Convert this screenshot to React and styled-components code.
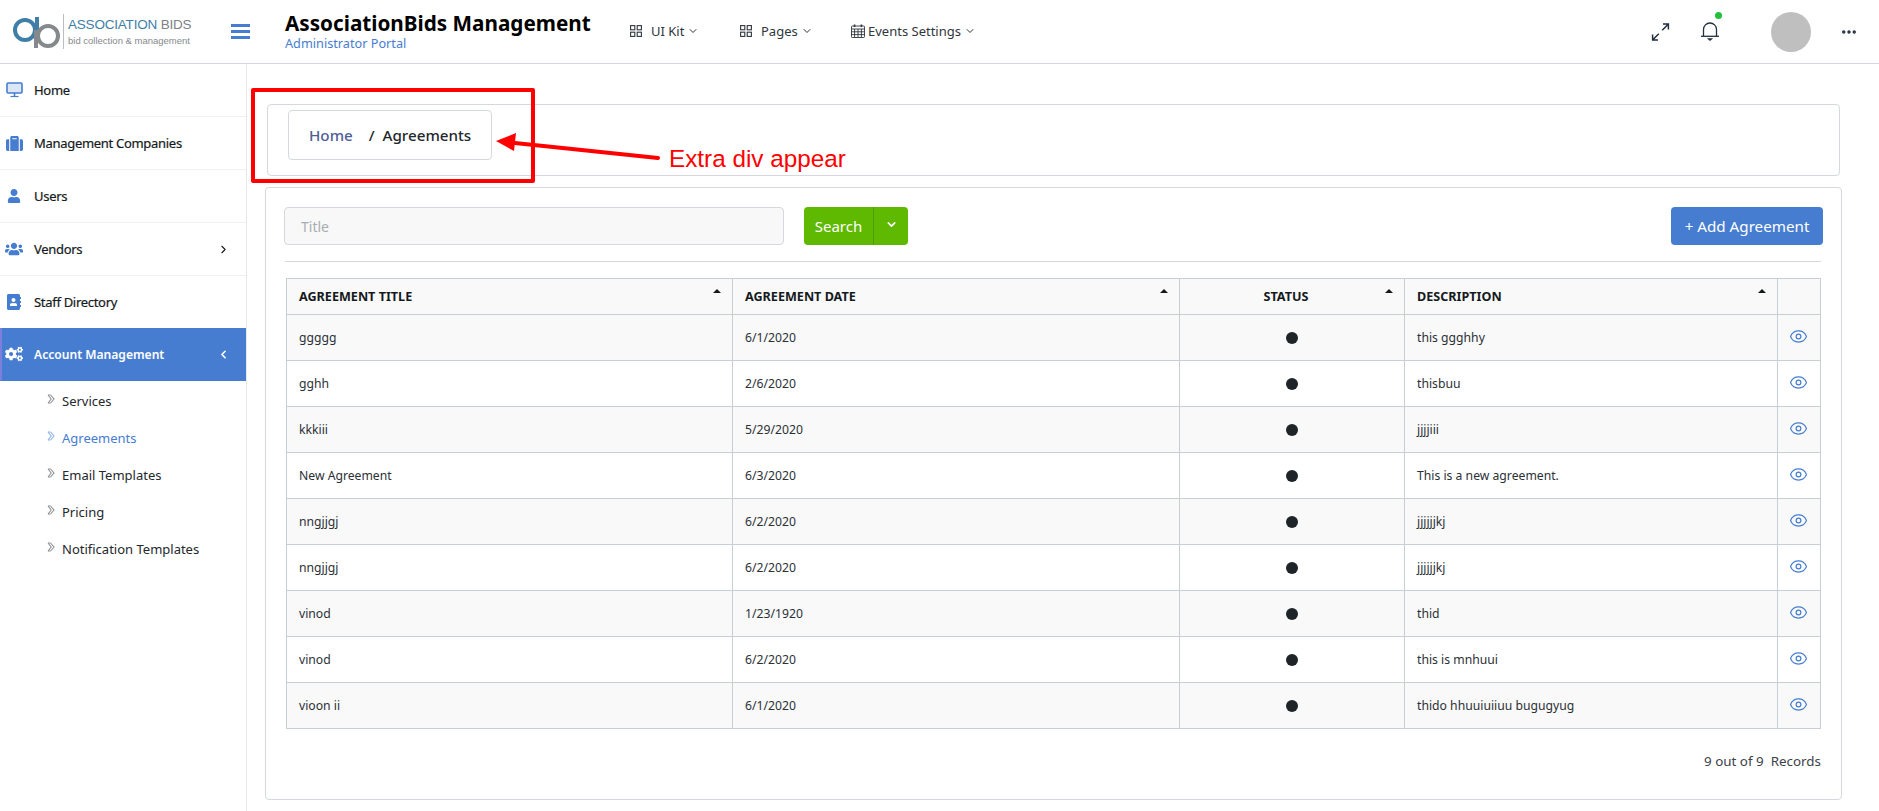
import React from "react";
import styled, { createGlobalStyle } from "styled-components";
import { FaSuitcase, FaUser, FaUsers, FaAddressBook, FaCogs } from "react-icons/fa";
import { ChevronDown, ChevronRight, ChevronLeft, Eye, MoreHorizontal } from "lucide-react";

const Global = createGlobalStyle`
  html, body { margin: 0; padding: 0; height: 811px; overflow: hidden; background: #fff; }
  body { font-family: "Noto Sans", "Open Sans", sans-serif; color: #23282c; font-size: 13px; }
  * { box-sizing: border-box; }
`;

const Page = styled.div`
  position: relative;
  width: 1879px;
  height: 811px;
`;

const Header = styled.header`
  display: flex;
  align-items: center;
  height: 64px;
  border-bottom: 1px solid #d5d8dc;
`;

const LogoWrap = styled.div`
  display: flex;
  align-items: center;
  width: 231px;
  padding-left: 13px;
  height: 100%;
`;

const LogoDivider = styled.div`
  width: 1px;
  height: 35px;
  margin: 0 4px 0 3px;
  background: #b9bdc1;
`;

const LogoText = styled.div`
  display: flex;
  flex-direction: column;
  line-height: 1;
`;

const LogoName = styled.span`
  font-family: "Liberation Sans", sans-serif;
  font-size: 13.5px;
  letter-spacing: -0.2px;
  color: #3f7ea6;
  white-space: nowrap;
  b { font-weight: 400; color: #7d8185; }
`;

const LogoSub = styled.span`
  margin-top: 4px;
  font-family: "Liberation Sans", sans-serif;
  font-size: 9.5px;
  color: #85898c;
  white-space: nowrap;
`;

const Burger = styled.button`
  display: flex;
  flex-direction: column;
  gap: 3px;
  width: 19px;
  padding: 0;
  border: 0;
  background: none;
  span { height: 3px; background: #467dd0; }
`;

const TitleBlock = styled.div`
  width: 345px;
  margin-left: 35px;
  display: flex;
  flex-direction: column;
  margin-top: -2px;
`;

const Title = styled.div`
  font-size: 20.7px;
  font-weight: 700;
  line-height: 25px;
  color: #000;
  white-space: nowrap;
`;

const Subtitle = styled.div`
  font-size: 12.7px;
  line-height: 14px;
  color: #467dd0;
`;

const Nav = styled.nav`
  display: flex;
  align-items: center;
  height: 100%;
  padding-bottom: 1px;
`;

const NavItem = styled.div`
  display: flex;
  align-items: center;
  width: ${(p) => p.$w}px;
  color: #2f363c;
  font-size: 13px;
  white-space: nowrap;
  svg { flex: none; }
`;

const NavLabel = styled.span`
  margin: 0 3px 0 ${(p) => p.$gap}px;
`;

const HeaderRight = styled.div`
  display: flex;
  align-items: center;
  margin-left: auto;
  padding-right: 21px;
`;

const ExpandSlot = styled.div`
  display: flex;
  justify-content: center;
  width: 20px;
  margin-right: 25px;
  color: #23303f;
`;

const BellSlot = styled.div`
  position: relative;
  display: flex;
  justify-content: center;
  width: 30px;
  color: #23303f;
`;

const DotsSlot = styled.div`
  display: flex;
  justify-content: center;
  width: 18px;
  color: #23303f;
`;

const GreenDot = styled.span`
  position: absolute;
  top: -9px;
  left: 20px;
  width: 7px;
  height: 7px;
  border-radius: 50%;
  background: #22c03c;
`;

const Avatar = styled.div`
  width: 40px;
  height: 40px;
  margin: 0 29px 0 46px;
  border-radius: 50%;
  background: #bfbfbf;
`;

const Body = styled.div`
  display: flex;
  height: 747px;
`;

const Sidebar = styled.aside`
  width: 247px;
  flex: none;
  border-right: 1px solid #e6e8ea;
`;

const MenuItem = styled.div`
  display: flex;
  align-items: center;
  height: 53px;
  margin-top: ${(p) => (p.$active ? "-1px" : "0")};
  padding-left: ${(p) => (p.$active ? "4px" : "6px")};
  border-bottom: 1px solid ${(p) => (p.$active ? "transparent" : "#eef0f1")};
  border-left: ${(p) => (p.$active ? "2px solid #7c80dc" : "0")};
  background: ${(p) => (p.$active ? "#467dd0" : "transparent")};
  color: ${(p) => (p.$active ? "#fff" : "#141a20")};
  font-weight: ${(p) => (p.$active ? 600 : 400)};
  font-size: ${(p) => (p.$active ? "12.1px" : "13px")};
  letter-spacing: ${(p) => (p.$active ? "0" : "-0.3px")};
  -webkit-text-stroke: ${(p) => (p.$active ? "0" : "0.2px")};
`;

const MenuIcon = styled.span`
  display: flex;
  justify-content: center;
  width: 18px;
  margin-left: -1px;
  margin-right: 11px;
  color: ${(p) => (p.$active ? "#fff" : "#467dd0")};
`;

const MenuCaret = styled.span`
  display: flex;
  margin-left: auto;
  margin-right: 16px;
`;

const SubMenu = styled.div`
  display: flex;
  flex-direction: column;
  padding: 1px 0 0 47px;
`;

const SubItem = styled.div`
  display: flex;
  align-items: center;
  height: 37px;
  font-size: 13px;
  color: ${(p) => (p.$active ? "#467dd0" : "#23282c")};
  svg { margin-right: 7px; margin-top: -3px; color: ${(p) => (p.$active ? "#8fb2e6" : "#8d9194")}; }
`;

const Main = styled.main`
  flex: 1;
  padding: 40px 37px 0 18px;
  display: flex;
  flex-direction: column;
  gap: 11px;
`;

const BreadcrumbCard = styled.div`
  display: flex;
  align-items: center;
  height: 72px;
  margin-left: 2px;
  margin-right: 2px;
  padding-left: 20px;
  border: 1px solid #d5d8dc;
  border-radius: 4px;
`;

const Breadcrumb = styled.div`
  display: flex;
  align-items: center;
  width: 204px;
  height: 50px;
  padding-left: 20px;
  margin-top: -10px;
  border: 1px solid #d5d8dc;
  border-radius: 4px;
  font-size: 15.2px;
  font-weight: 500;
  white-space: nowrap;
`;

const CrumbLink = styled.span`
  color: #4f5d95;
  margin-right: 16px;
`;

const ContentCard = styled.section`
  height: 613px;
  padding: 19px 20px 0 18px;
  border: 1px solid #d5d8dc;
  border-radius: 4px;
`;

const Toolbar = styled.div`
  display: flex;
  align-items: center;
  height: 55px;
  padding-bottom: 16px;
  border-bottom: 1px solid #d5d8dc;
  margin-left: 1px;
`;

const SearchInput = styled.input`
  width: 500px;
  height: 38px;
  margin-left: -1px;
  padding: 0 16px;
  background: #f8f8f8;
  border: 1px solid #d5d8dc;
  border-radius: 4px;
  font: inherit;
  font-size: 14px;
  &::placeholder { color: #a9adb1; }
`;

const SplitButton = styled.div`
  display: flex;
  height: 38px;
  margin-left: 20px;
  border-radius: 4px;
  overflow: hidden;
  background: #5eb900;
  color: #fff;
  font-size: 15px;
`;

const SearchPart = styled.span`
  display: flex;
  align-items: center;
  justify-content: center;
  width: 70px;
  border-right: 1px solid #4e9c00;
`;

const CaretPart = styled.span`
  display: flex;
  align-items: center;
  justify-content: center;
  width: 34px;
  padding-bottom: 3px;
`;

const AddButton = styled.button`
  width: 152px;
  height: 38px;
  margin-left: auto;
  margin-right: -2px;
  border: 0;
  border-radius: 4px;
  background: #467dd0;
  color: #fff;
  font: inherit;
  font-size: 15.2px;
`;

const Table = styled.table`
  width: 1534px;
  margin: 16px 0 0 2px;
  border-collapse: collapse;
  table-layout: fixed;
  font-size: 12.2px;
`;

const Th = styled.th`
  position: relative;
  height: 36px;
  padding: ${(p) => (p.$center ? "0 24px 0 12px" : "0 12px")};
  border: 1px solid #c8ced3;
  background: #f9f9f9;
  color: #15191d;
  font-size: 12.6px;
  font-weight: 700;
  text-align: ${(p) => (p.$center ? "center" : "left")};
  text-transform: uppercase;
`;

const SortCaret = styled.span`
  position: absolute;
  top: 10px;
  right: 11px;
  width: 0;
  height: 0;
  border-left: 4px solid transparent;
  border-right: 4px solid transparent;
  border-bottom: 4px solid #15191d;
`;

const Row = styled.tr`
  background: ${(p) => (p.$odd ? "#f9f9f9" : "#fff")};
`;

const Td = styled.td`
  height: 46px;
  padding: 0 12px;
  border: 1px solid #c8ced3;
  color: #2b3036;
  text-align: ${(p) => (p.$center ? "center" : "left")};
`;

const StatusDot = styled.span`
  display: block;
  width: 12px;
  height: 12px;
  margin: 0 auto;
  border-radius: 50%;
  background: #1f2429;
`;

const EyeIcon = styled(Eye)`
  display: block;
  margin: -2px -3px 0 -1px;
  color: #467dd0;
`;

const Records = styled.div`
  margin-top: 23px;
  text-align: right;
  font-size: 13.4px;
  color: #3b4248;
  white-space: pre;
`;

const RedBox = styled.div`
  position: absolute;
  left: 251px;
  top: 88px;
  width: 284px;
  height: 95px;
  border: 4px solid #ff0000;
  border-radius: 2px;
`;

const ArrowSvg = styled.svg`
  position: absolute;
  left: 490px;
  top: 130px;
`;

const Note = styled.div`
  position: absolute;
  left: 669px;
  top: 144px;
  font-family: "Liberation Sans", sans-serif;
  font-size: 24.3px;
  line-height: 30px;
  color: #ff0000;
  white-space: nowrap;
`;

const GridIcon = () => (
  <svg width="12" height="12" viewBox="0 0 12 12" fill="none" stroke="currentColor" strokeWidth="1.1">
    <rect x="0.6" y="0.6" width="4.2" height="4.2" />
    <rect x="7.2" y="0.6" width="4.2" height="4.2" />
    <rect x="0.6" y="7.2" width="4.2" height="4.2" />
    <rect x="7.2" y="7.2" width="4.2" height="4.2" />
  </svg>
);

const CalendarIcon = () => (
  <svg width="14" height="14" viewBox="0 0 14 14" fill="none" stroke="currentColor" strokeWidth="0.9">
    <rect x="0.5" y="2" width="13" height="11.5" rx="0.8" />
    <path d="M0.5 5h13M0.5 7.8h13M0.5 10.6h13M3.6 5v8.5M7 5v8.5M10.4 5v8.5" />
    <path d="M3.6 0.5v2.6M10.4 0.5v2.6" strokeWidth="1.6" />
  </svg>
);

const ExpandIcon = () => (
  <svg width="19" height="18" viewBox="0 0 19 18" fill="none" stroke="currentColor" strokeWidth="1.5">
    <path d="M11.2 7.2L17.2 1.2M12 1h5.4v5.4" />
    <path d="M7.8 10.8L1.8 16.8M1.6 11.6V17H7" />
  </svg>
);

const BellIcon = () => (
  <svg width="20" height="21" viewBox="0 0 20 21" fill="none" stroke="currentColor" strokeWidth="1.3">
    <path d="M3.5 15V8.5a6.5 6.5 0 0 1 13 0V15" />
    <path d="M1 15.3h18" />
    <path d="M8.6 18h2.8L10 19.2z" fill="currentColor" />
  </svg>
);

const DesktopIcon = () => (
  <svg width="17" height="16" viewBox="0 0 17 16" fill="none" stroke="currentColor">
    <rect x="1" y="1" width="15" height="10" rx="1" strokeWidth="1.6" fill="#dbe6f6" />
    <path d="M8.5 11v3" strokeWidth="1.6" />
    <path d="M4.5 14.5h8" strokeWidth="1.2" />
  </svg>
);

const DoubleChevron = () => (
  <svg width="8" height="10" viewBox="0 0 8 10" fill="none" stroke="currentColor" strokeWidth="1.1">
    <path d="M1 1l3.2 4L1 9" />
    <path d="M3.6 1l3.4 4-3.4 4" />
    <path d="M1 1h2.6M1 9h2.6" />
  </svg>
);

const Logo = () => (
  <svg width="47" height="35" viewBox="0 0 47 35" fill="none">
    <circle cx="12" cy="16" r="10" stroke="#3f7ea6" strokeWidth="4" />
    <path d="M24 3v23" stroke="#3f7ea6" strokeWidth="4" />
    <circle cx="35" cy="22" r="10" stroke="#85898c" strokeWidth="4" />
    <path d="M23 34V16" stroke="#85898c" strokeWidth="4" />
  </svg>
);

const rows = [
  ["ggggg", "6/1/2020", "this ggghhy"],
  ["gghh", "2/6/2020", "thisbuu"],
  ["kkkiii", "5/29/2020", "jjjjiii"],
  ["New Agreement", "6/3/2020", "This is a new agreement."],
  ["nngjjgj", "6/2/2020", "jjjjjjkj"],
  ["nngjjgj", "6/2/2020", "jjjjjjkj"],
  ["vinod", "1/23/1920", "thid"],
  ["vinod", "6/2/2020", "this is mnhuui"],
  ["vioon ii", "6/1/2020", "thido hhuuiuiiuu bugugyug"],
];

const menu = [
  ["Home", <DesktopIcon />],
  ["Management Companies", <FaSuitcase size={17} />],
  ["Users", <FaUser size={14} />],
  ["Vendors", <FaUsers size={20} />, "right"],
  ["Staff Directory", <FaAddressBook size={16} />],
  ["Account Management", <FaCogs size={18} />, "left", true],
];

const subItems = ["Services", "Agreements", "Email Templates", "Pricing", "Notification Templates"];

export default function App() {
  return (
    <Page>
      <Global />
      <Header>
        <LogoWrap>
          <Logo />
          <LogoDivider />
          <LogoText>
            <LogoName>ASSOCIATION <b>BIDS</b></LogoName>
            <LogoSub>bid collection &amp; management</LogoSub>
          </LogoText>
        </LogoWrap>
        <Burger aria-label="menu"><span /><span /><span /></Burger>
        <TitleBlock>
          <Title>AssociationBids Management</Title>
          <Subtitle>Administrator Portal</Subtitle>
        </TitleBlock>
        <Nav>
          <NavItem $w={110}><GridIcon /><NavLabel $gap={9}>UI Kit</NavLabel><ChevronDown size={12} strokeWidth={2} /></NavItem>
          <NavItem $w={111}><GridIcon /><NavLabel $gap={9}>Pages</NavLabel><ChevronDown size={12} strokeWidth={2} /></NavItem>
          <NavItem $w={130}><CalendarIcon /><NavLabel $gap={3}>Events Settings</NavLabel><ChevronDown size={12} strokeWidth={2} /></NavItem>
        </Nav>
        <HeaderRight>
          <ExpandSlot><ExpandIcon /></ExpandSlot>
          <BellSlot>
            <BellIcon />
            <GreenDot />
          </BellSlot>
          <Avatar />
          <DotsSlot><MoreHorizontal size={18} strokeWidth={2.6} /></DotsSlot>
        </HeaderRight>
      </Header>
      <Body>
        <Sidebar>
          {menu.map(([label, icon, caret, active]) => (
            <MenuItem key={label} $active={active}>
              <MenuIcon $active={active}>{icon}</MenuIcon>
              {label}
              {caret && (
                <MenuCaret>
                  {caret === "right" ? <ChevronRight size={13} /> : <ChevronLeft size={13} strokeWidth={3} />}
                </MenuCaret>
              )}
            </MenuItem>
          ))}
          <SubMenu>
            {subItems.map((s) => (
              <SubItem key={s} $active={s === "Agreements"}>
                <DoubleChevron />
                {s}
              </SubItem>
            ))}
          </SubMenu>
        </Sidebar>
        <Main>
          <BreadcrumbCard>
            <Breadcrumb>
              <CrumbLink>Home</CrumbLink>/&nbsp;&nbsp;Agreements
            </Breadcrumb>
          </BreadcrumbCard>
          <ContentCard>
            <Toolbar>
              <SearchInput placeholder="Title" />
              <SplitButton>
                <SearchPart>Search</SearchPart>
                <CaretPart><ChevronDown size={13} strokeWidth={3} /></CaretPart>
              </SplitButton>
              <AddButton>+ Add Agreement</AddButton>
            </Toolbar>
            <Table>
              <colgroup>
                <col width="446" />
                <col width="447" />
                <col width="225" />
                <col width="373" />
                <col width="43" />
              </colgroup>
              <thead>
                <tr>
                  <Th>Agreement Title<SortCaret /></Th>
                  <Th>Agreement Date<SortCaret /></Th>
                  <Th $center>Status<SortCaret /></Th>
                  <Th>Description<SortCaret /></Th>
                  <Th />
                </tr>
              </thead>
              <tbody>
                {rows.map((r, i) => (
                  <Row key={i} $odd={i % 2 === 0}>
                    <Td>{r[0]}</Td>
                    <Td>{r[1]}</Td>
                    <Td $center><StatusDot /></Td>
                    <Td>{r[2]}</Td>
                    <Td $center><EyeIcon size={19} strokeWidth={1.5} /></Td>
                  </Row>
                ))}
              </tbody>
            </Table>
            <Records>9 out of 9  Records</Records>
          </ContentCard>
        </Main>
      </Body>
      <RedBox />
      <ArrowSvg width="175" height="35" viewBox="0 0 175 35">
        <path d="M20 12.5 L168 28" stroke="#ff0000" strokeWidth="4" strokeLinecap="round" />
        <path d="M6 11 L26 3 L24 21 Z" fill="#ff0000" />
      </ArrowSvg>
      <Note>Extra div appear</Note>
    </Page>
  );
}
